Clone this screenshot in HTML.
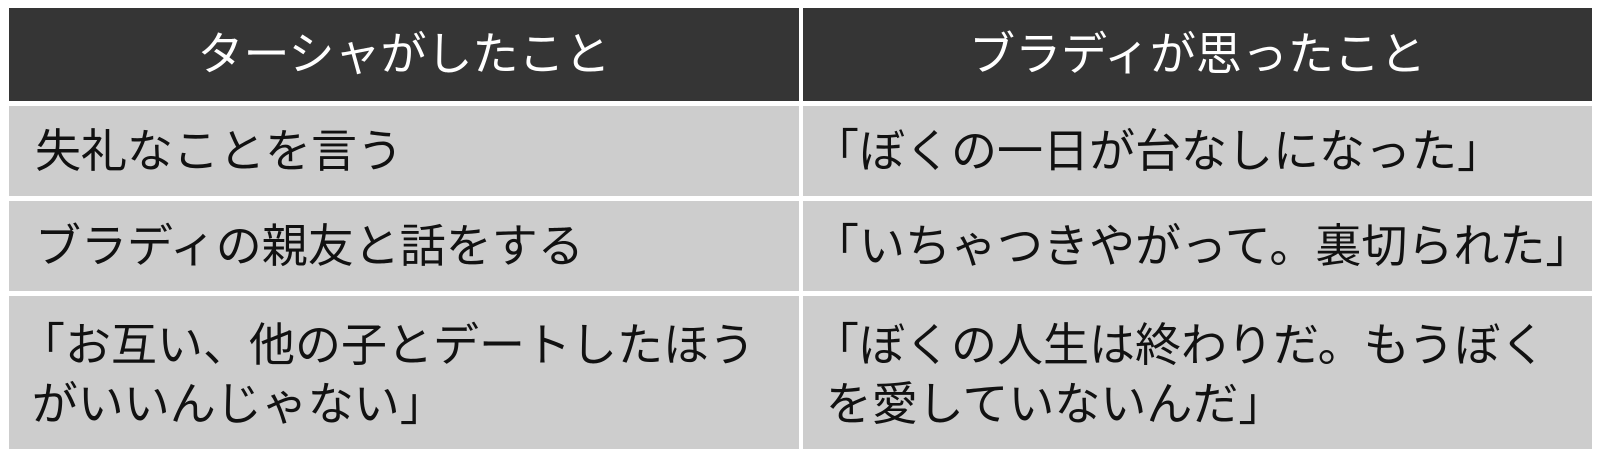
<!DOCTYPE html>
<html><head><meta charset="utf-8"><style>
html,body{margin:0;padding:0;background:#fff;width:1600px;height:457px;overflow:hidden}
.c{position:absolute;box-sizing:border-box;font-family:"Liberation Sans","Noto Sans CJK JP",sans-serif;font-size:46px;color:#111;padding-left:26px;display:flex;align-items:center;line-height:59px;background:#cdcdcd}
.h{background:#353535;color:#fff;justify-content:center;padding-left:0}
.b{padding-left:10px}
</style></head><body>
<div class="c h" style="left:9px;top:8px;width:790px;height:93px">ターシャがしたこと</div>
<div class="c h" style="left:803px;top:8px;width:789px;height:93px">ブラディが思ったこと</div>
<div class="c" style="left:9px;top:106px;width:790px;height:90px">失礼なことを言う</div>
<div class="c b" style="left:803px;top:106px;width:789px;height:90px">「ぼくの一日が台なしになった」</div>
<div class="c" style="left:9px;top:201px;width:790px;height:90px">ブラディの親友と話をする</div>
<div class="c b" style="left:803px;top:201px;width:789px;height:90px">「いちゃつきやがって。裏切られた」</div>
<div class="c b" style="left:9px;top:296px;width:790px;height:153px;padding-top:4px">「お互い、他の子とデートしたほう<br>&nbsp;がいいんじゃない」</div>
<div class="c b" style="left:803px;top:296px;width:789px;height:153px;padding-top:4px">「ぼくの人生は終わりだ。もうぼく<br>&nbsp;を愛していないんだ」</div>
</body></html>
